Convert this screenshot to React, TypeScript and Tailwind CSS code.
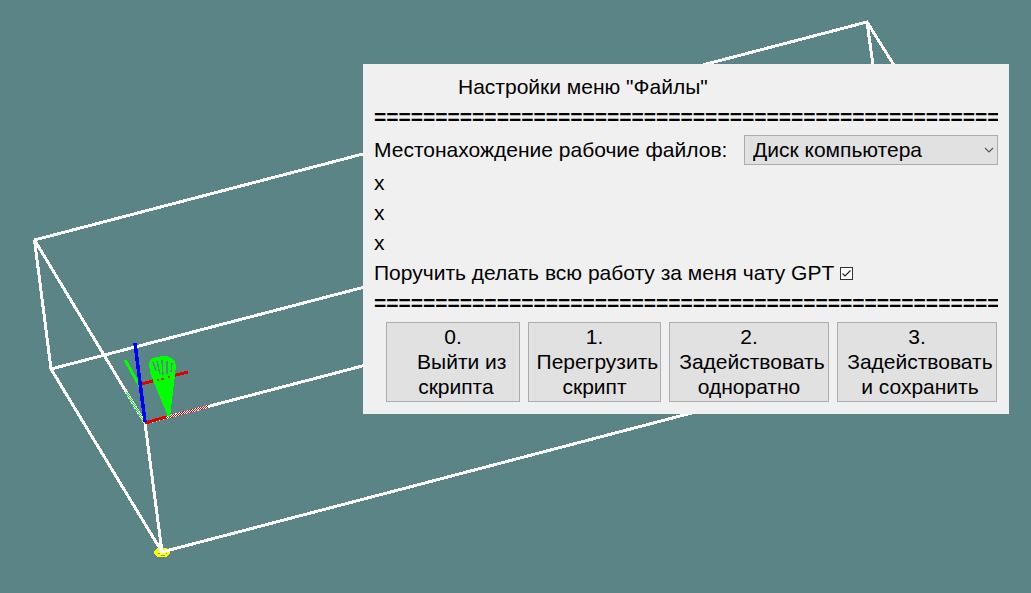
import { useState } from "react";

const SEPARATOR = "=".repeat(51);

const storages = ["Диск компьютера", "Сетевой диск", "Облако"];

const actions = [
  "0.\n   Выйти из\n скрипта",
  "1.\n Перегрузить\nскрипт",
  "2.\n Задействовать\nодноратно",
  "3.\n Задействовать\n и сохранить",
];

// Path of single dots in a checkerboard along a three-pixel-wide line.
function stipple(x1: number, y1: number, x2: number, y2: number) {
  const flat = Math.abs(x2 - x1) >= Math.abs(y2 - y1);
  const steps = flat ? Math.abs(x2 - x1) : Math.abs(y2 - y1);
  let d = "";
  for (let i = 0; i <= steps; i++) {
    const cx = Math.round(x1 + ((x2 - x1) * i) / steps);
    const cy = Math.round(y1 + ((y2 - y1) * i) / steps);
    for (let k = -1; k <= 1; k++) {
      const x = flat ? cx : cx + k;
      const y = flat ? cy + k : cy;
      if ((x + y) % 2 === 0) d += `M${x} ${y}h1v1h-1z`;
    }
  }
  return d;
}

function Scene() {
  return (
    <svg
      aria-hidden="true"
      className="absolute left-0 top-0"
      width="1031"
      height="593"
      viewBox="0 0 1031 593"
      fill="none"
      shapeRendering="crispEdges"
    >
      <ellipse cx="162" cy="552.5" rx="8" ry="5" fill="#ffff00" />
      <path d="M158 553h2M161 555h4M166 553h1" stroke="#9aa040" strokeWidth="1" />
      <g stroke="#ffffff" strokeWidth="3">
        <path d="M34.5 240L867 22L1001 236" />
        <path d="M867 22L885 151" />
        <path d="M34.5 240L51 369L162 552L1000 332" />
        <path d="M34.5 240L145 423L162 552" />
        <path d="M51 369L885 151" />
        <path d="M145 423L980 204" />
      </g>
      <path d="M125 360L142 390" stroke="#00ff00" strokeWidth="3" />
      <path d={stipple(126, 392, 144, 422)} fill="#00ff00" />
      <path d="M145 423L166 417" stroke="#e00000" strokeWidth="3" />
      <path d={stipple(166, 417, 207, 406)} fill="#e00000" />
      <path d="M141 384L188 372" stroke="#e00000" strokeWidth="3" />
      <path
        d="M149 363Q151 357 158 357Q169 354 175 361L176 366L170 417H168L150 373Z"
        fill="#00ff00"
      />
      <path
        d="M153 362L156 371M157 361L160 374M162 360L163 375M167 361V374M172 363L171 372"
        stroke="#5a8486"
        strokeWidth="1.5"
      />
      <path d="M157 380h2M161 379h3M168 377h2" stroke="#a05000" strokeWidth="2" />
      <path d="M135 343L145 422" stroke="#0000ff" strokeWidth="3.5" />
    </svg>
  );
}

export default function App() {
  const [delegate, setDelegate] = useState(true);

  return (
    <main className="relative flex min-h-screen items-start justify-end overflow-hidden bg-[#5a8486] px-[22px] py-16 font-['Liberation_Sans',Arial,sans-serif] text-[21px] text-black">
      <Scene />
      <form
        className="relative w-full max-w-[646px] bg-[#f0f0f0] px-[11px] pb-3 pt-2 leading-[30px]"
        onSubmit={(event) => event.preventDefault()}
      >
        <h1 className="pl-[84px]">Настройки меню "Файлы"</h1>
        <div aria-hidden="true" className="overflow-hidden whitespace-nowrap font-bold">
          {SEPARATOR}
        </div>
        <div className="flex items-center justify-between gap-4 py-[3px]">
          <label htmlFor="storage" className="whitespace-nowrap">
            Местонахождение рабочие файлов:
          </label>
          <div className="grid w-[254px] items-center">
            <select
              id="storage"
              className="col-start-1 row-start-1 h-[30px] w-full appearance-none border border-[#adadad] bg-[#e1e1e1] pl-2 pr-6 leading-7"
            >
              {storages.map((name) => (
                <option key={name}>{name}</option>
              ))}
            </select>
            <svg
              aria-hidden="true"
              className="pointer-events-none col-start-1 row-start-1 mr-1 justify-self-end"
              width="10"
              height="6"
              viewBox="0 0 10 6"
              fill="none"
            >
              <path d="M1 1L5 5L9 1" stroke="#555555" strokeWidth="1.1" />
            </svg>
          </div>
        </div>
        <p>x</p>
        <p>x</p>
        <p>x</p>
        <div className="flex items-center gap-1.5">
          <label htmlFor="delegate" className="whitespace-nowrap">
            Поручить делать всю работу за меня чату GPT
          </label>
          <span className="grid items-center justify-items-center">
            <input
              id="delegate"
              type="checkbox"
              checked={delegate}
              onChange={(event) => setDelegate(event.target.checked)}
              className="col-start-1 row-start-1 size-[13px] appearance-none border border-[#333333] bg-white"
            />
            {delegate && (
              <svg
                aria-hidden="true"
                className="pointer-events-none col-start-1 row-start-1"
                width="13"
                height="13"
                viewBox="0 0 13 13"
                fill="none"
              >
                <path d="M2.5 6.5L5 9L10.5 3.5" stroke="#222222" strokeWidth="1.2" />
              </svg>
            )}
          </span>
        </div>
        <div aria-hidden="true" className="overflow-hidden whitespace-nowrap font-bold">
          {SEPARATOR}
        </div>
        <div className="grid grid-cols-[134fr_133fr_160fr_160fr] gap-2 pl-3 pr-px pt-1">
          {actions.map((label) => (
            <button
              key={label}
              type="button"
              className="h-20 whitespace-pre border border-[#adadad] bg-[#e1e1e1] pb-0.5 text-center leading-[25px]"
            >
              {label}
            </button>
          ))}
        </div>
      </form>
    </main>
  );
}
